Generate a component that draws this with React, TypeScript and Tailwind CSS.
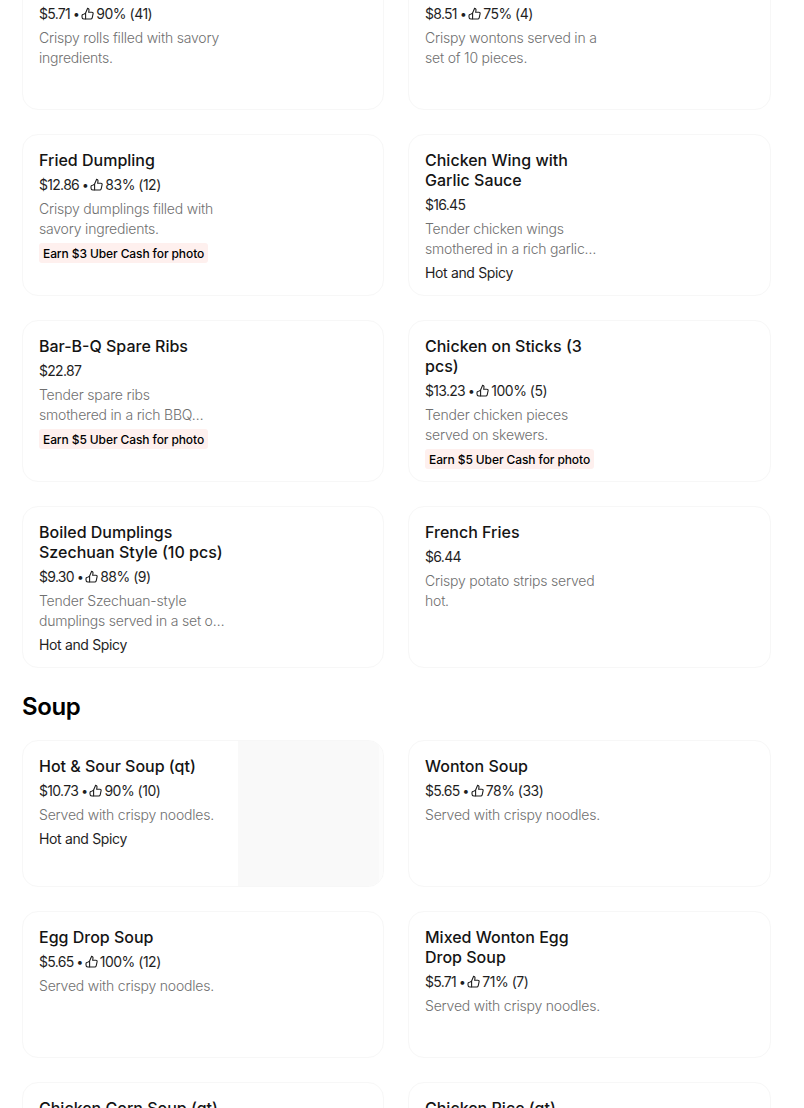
import React from "react";

type Item = { t: string; p: string; r?: string; d: string; tag?: string; earn?: string; img?: boolean };

const Thumb = () => (
  <svg className="ml-[2px] mr-[2px] shrink-0" width="13" height="14" viewBox="0 0 13 14" fill="none" stroke="currentColor" strokeWidth="1.1">
    <path d="M4.6 6 6.6 1.4c.9 0 1.5.7 1.4 1.6L7.7 5.2h3.2c.8 0 1.4.7 1.2 1.5l-.9 4.1c-.2.8-.7 1.2-1.5 1.2H4.6z" />
    <path d="M4.6 6.4C3.4 6.6 3.4 7.2 2.6 7.2 1.6 7.2 1 8 1 9v1c0 1.2.7 2 1.8 2h1.8" />
  </svg>
);

const Card = ({ t, p, r, d, tag, earn, img }: Item) => (
  <div className="flex min-h-[147px] rounded-2xl border border-[#f7f7f7] bg-white overflow-hidden">
    <div className="w-[215px] shrink-0 pt-[15px] pl-4 pr-[15px] pb-3">
      <div className="text-[16px] leading-5 font-medium text-[#141414]">{t}</div>
      <div className="mt-[5px] flex items-center text-[14px] leading-5 tracking-[-0.5px] text-[#1f1f1f]">
        <span className="tracking-[-0.7px]">{p}</span>
        {r && <span className="ml-[3px] text-[12px]">•</span>}
        {r && <Thumb />}
        {r && <span>{r}</span>}
      </div>
      <div className={(d.includes("\n") ? "whitespace-pre " : "") + "mt-[4px] text-[14px] leading-5 font-light tracking-[-0.2px] text-[#707070]"}>{d}</div>
      {tag && <div className="mt-[4px] text-[14px] leading-5 tracking-[-0.35px] text-[#1f1f1f]">{tag}</div>}
      {earn && (
        <div className="mt-[4px] w-fit h-5 rounded-[3px] bg-[#fef0ee] px-1 pt-px text-[12px] leading-5 tracking-[-0.1px] font-medium text-black">{earn}</div>
      )}
    </div>
    <div className={img ? "flex-1 bg-[#f9f9f9] border-r-[4px] border-[#fcfcfc]" : "flex-1"} />
  </div>
);

const top: Item[] = [
  { t: "Spring Roll", p: "$5.71", r: "90% (41)", d: "Crispy rolls filled with savory ingredients." },
  { t: "Fried Wonton (10 pcs)", p: "$8.51", r: "75% (4)", d: "Crispy wontons served in a set of 10 pieces." },
  { t: "Fried Dumpling", p: "$12.86", r: "83% (12)", d: "Crispy dumplings filled with\nsavory ingredients.", earn: "Earn $3 Uber Cash for photo" },
  { t: "Chicken Wing with Garlic Sauce", p: "$16.45", d: "Tender chicken wings\nsmothered in a rich garlic…", tag: "Hot and Spicy" },
  { t: "Bar-B-Q Spare Ribs", p: "$22.87", d: "Tender spare ribs\nsmothered in a rich BBQ…", earn: "Earn $5 Uber Cash for photo" },
  { t: "Chicken on Sticks (3 pcs)", p: "$13.23", r: "100% (5)", d: "Tender chicken pieces\nserved on skewers.", earn: "Earn $5 Uber Cash for photo" },
  { t: "Boiled Dumplings Szechuan Style (10 pcs)", p: "$9.30", r: "88% (9)", d: "Tender Szechuan-style\ndumplings served in a set o…", tag: "Hot and Spicy" },
  { t: "French Fries", p: "$6.44", d: "Crispy potato strips served hot." },
];

const soup: Item[] = [
  { t: "Hot & Sour Soup (qt)", p: "$10.73", r: "90% (10)", d: "Served with crispy noodles.", tag: "Hot and Spicy", img: true },
  { t: "Wonton Soup", p: "$5.65", r: "78% (33)", d: "Served with crispy noodles." },
  { t: "Egg Drop Soup", p: "$5.65", r: "100% (12)", d: "Served with crispy noodles." },
  { t: "Mixed Wonton Egg Drop Soup", p: "$5.71", r: "71% (7)", d: "Served with crispy noodles." },
  { t: "Chicken Corn Soup (qt)", p: "$5.65", d: "Served with crispy noodles." },
  { t: "Chicken Rice (qt)", p: "$5.65", d: "Served with crispy noodles." },
];

export default function App() {
  return (
    <div className="h-[1108px] overflow-hidden bg-white font-['Inter',sans-serif]">
      <div className="-mt-[37px] pl-[22px]">
        <div className="grid grid-cols-[362px_363px] gap-6">
          {top.map((x) => <Card key={x.t} {...x} />)}
        </div>
        <h2 className="mt-[23px] mb-[17px] text-[24px] leading-8 font-semibold tracking-[-0.4px] text-black">Soup</h2>
        <div className="grid grid-cols-[362px_363px] gap-6">
          {soup.map((x) => <Card key={x.t} {...x} />)}
        </div>
      </div>
    </div>
  );
}
